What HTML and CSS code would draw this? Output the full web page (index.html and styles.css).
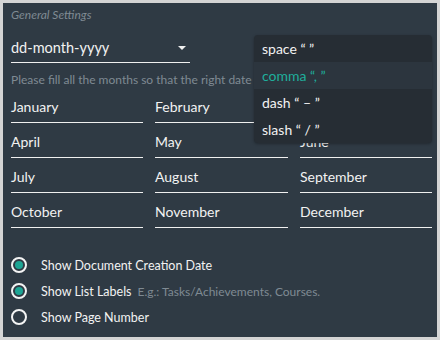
FILE: index.html
```html
<!DOCTYPE html>
<html>
<head>
<meta charset="utf-8">
<link rel="stylesheet" href="styles.css">
</head>
<body>
<div class="panel">
  <div class="title">General Settings</div>
  <div class="select">
    <span class="select-value">dd-month-yyyy</span>
    <span class="caret"></span>
  </div>
  <div class="hint">Please fill all the months so that the right date is used.</div>
  <div class="months">
    <div class="field">January</div>
    <div class="field">February</div>
    <div class="field">March</div>
    <div class="field">April</div>
    <div class="field">May</div>
    <div class="field">June</div>
    <div class="field">July</div>
    <div class="field">August</div>
    <div class="field">September</div>
    <div class="field">October</div>
    <div class="field">November</div>
    <div class="field">December</div>
  </div>
  <div class="options">
    <div class="option"><span class="radio checked"></span><span class="label">Show Document Creation Date</span></div>
    <div class="option"><span class="radio checked"></span><span class="label">Show List Labels</span><span class="note">E.g.: Tasks/Achievements, Courses.</span></div>
    <div class="option"><span class="radio"></span><span class="label">Show Page Number</span></div>
  </div>
  <ul class="menu">
    <li class="menu-item">space “ ”</li>
    <li class="menu-item active">comma “, ”</li>
    <li class="menu-item">dash “ – ”</li>
    <li class="menu-item">slash “ / ”</li>
  </ul>
</div>
</body>
</html>
```
FILE: styles.css
```css
html, body {
  margin: 0;
  padding: 0;
  background: #d4d4d4;
}
body {
  padding: 3px;
  font-family: Lato, "Open Sans", sans-serif;
}
.panel {
  position: relative;
  box-sizing: border-box;
  width: 434px;
  height: 334px;
  padding: 4px 8px 0 8px;
  background: #2f3a44;
  color: #f2f2f2;
  overflow: hidden;
}
.title {
  font-size: 12px;
  line-height: 16px;
  font-style: italic;
  color: #7f8a93;
}
.select {
  margin-top: 15px;
  width: 179px;
  display: flex;
  align-items: center;
  justify-content: space-between;
  padding-bottom: 4px;
  border-bottom: 1px solid #f0f0f0;
}
.select-value {
  font-size: 14.5px;
  line-height: 20px;
}
.caret {
  width: 0;
  height: 0;
  margin-right: 4px;
  border-left: 4px solid transparent;
  border-right: 4px solid transparent;
  border-top: 4px solid #f0f0f0;
}
.hint {
  margin-top: 9px;
  font-size: 12px;
  line-height: 16px;
  color: #7f8a93;
  white-space: nowrap;
}
.months {
  margin-top: 9px;
  display: grid;
  grid-template-columns: 132px 133px 132px;
  column-gap: 12px;
  row-gap: 9px;
}
.field {
  font-size: 14px;
  line-height: 20px;
  padding-bottom: 5px;
  border-bottom: 1px solid #f0f0f0;
}
.options {
  margin-top: 24px;
}
.option {
  display: flex;
  align-items: center;
  height: 26px;
}
.radio {
  box-sizing: border-box;
  width: 16px;
  height: 16px;
  border: 2px solid #f4f4f4;
  border-radius: 50%;
  margin-left: 0;
  margin-right: 14px;
  display: flex;
  align-items: center;
  justify-content: center;
}
.radio.checked::after {
  content: "";
  width: 8px;
  height: 8px;
  border-radius: 50%;
  background: #1da594;
}
.label {
  font-size: 12.5px;
  color: #f2f2f2;
}
.note {
  margin-left: 6px;
  font-size: 12px;
  color: #7f8a93;
}
.menu {
  position: absolute;
  left: 251px;
  top: 32px;
  width: 178px;
  margin: 0;
  padding: 0;
  list-style: none;
  background: #262d34;
  border-radius: 4px;
  overflow: hidden;
  box-shadow: 0 1px 3px rgba(0,0,0,0.3);
}
.menu-item {
  height: 27px;
  line-height: 27px;
  padding-left: 8px;
  font-size: 14px;
  color: #f2f2f2;
}
.menu-item.active {
  background: #2c353e;
  color: #1fae9c;
}
```
